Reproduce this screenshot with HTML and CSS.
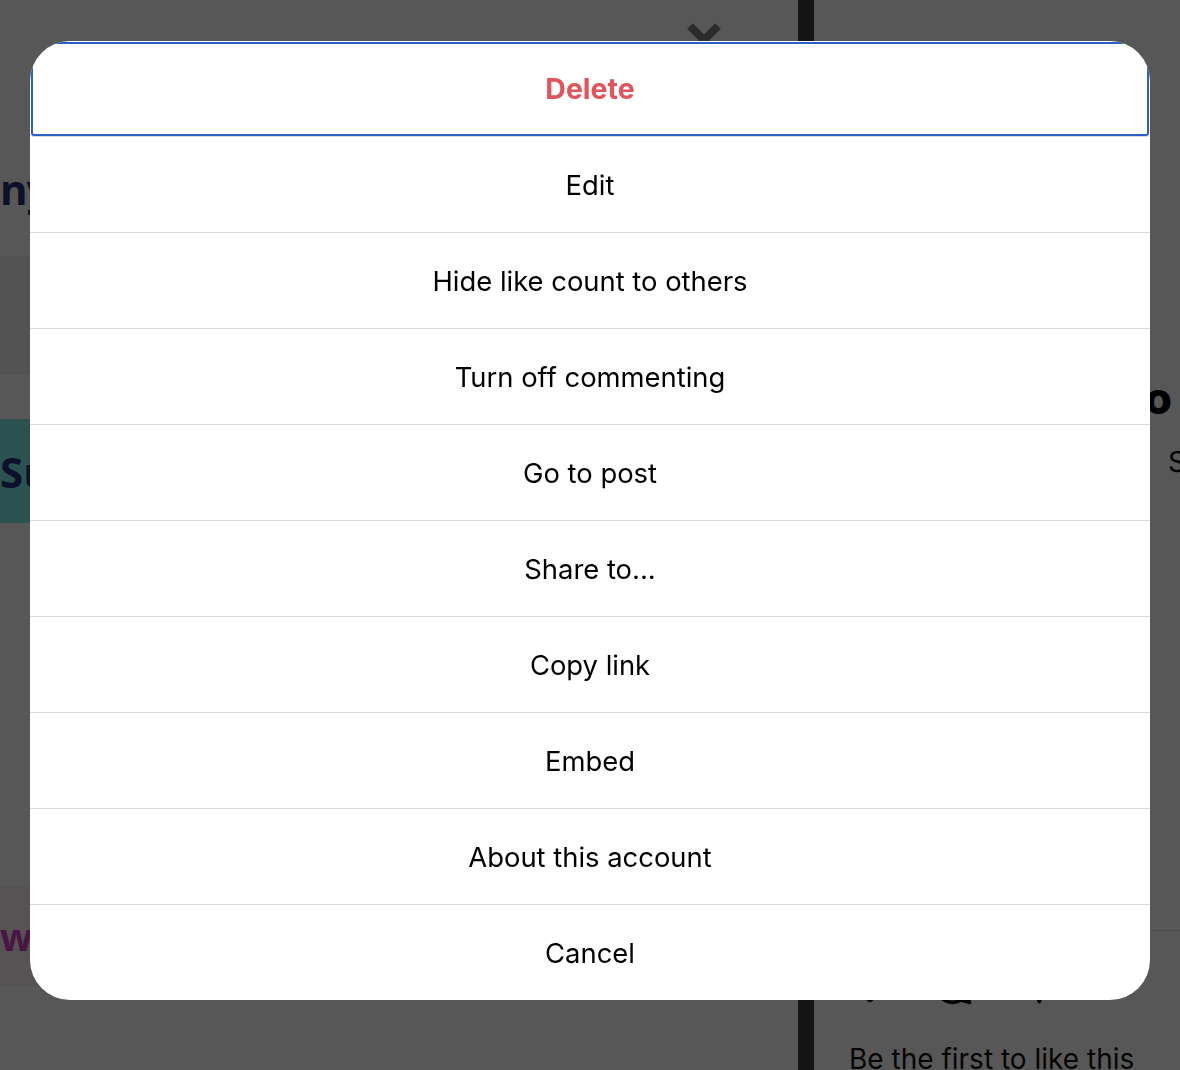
FILE: index.html
```html
<!DOCTYPE html>
<html lang="en">
  <head>
    <meta charset="utf8">
    <meta name="viewport" content="width=device-width, initial-scale=1">
    <title>Post options</title>
    <link rel="stylesheet" href="styles.css">
  </head>

  <body>
    <div class="page">
      <section class="post-side">
        <div class="post-head">
          <div class="close-row">
            <svg class="close-icon" viewBox="0 0 36 36" aria-hidden="true">
              <path d="M4 4 L32 32 M32 4 L4 32" />
            </svg>
          </div>
          <h2 class="brand">ny</h2>
        </div>
        <div class="post-band"></div>
        <div class="promo promo-teal"><span>Su</span></div>
        <div class="promo promo-pink"><span>w</span></div>
      </section>

      <div class="divider"></div>

      <section class="detail-side">
        <h3 class="detail-title">Photo</h3>
        <p class="detail-sub">Sponsored</p>
        <div class="detail-actions">
          <svg class="action-icon" viewBox="0 0 24 24" aria-hidden="true">
            <path d="M12 21 C6 16 2.5 12.5 2.5 8.5 A4.8 4.8 0 0 1 12 6.5 A4.8 4.8 0 0 1 21.5 8.5 C21.5 12.5 18 16 12 21 Z" />
          </svg>
          <svg class="action-icon" viewBox="0 0 24 24" aria-hidden="true">
            <path d="M20.6 17.1 A9.5 9.5 0 1 0 17.1 20.6 L22 22 Z" />
          </svg>
          <svg class="action-icon" viewBox="0 0 24 24" aria-hidden="true">
            <path d="M22 3 L9.2 10.1 M22 3 L15 21.5 L11 11 L2 6.5 Z" />
          </svg>
        </div>
        <p class="likes">Be the first to like this</p>
      </section>
    </div>

    <div class="overlay">
      <div class="sheet" role="dialog">
        <button class="sheet-item danger focused">Delete</button>
        <button class="sheet-item">Edit</button>
        <button class="sheet-item">Hide like count to others</button>
        <button class="sheet-item">Turn off commenting</button>
        <button class="sheet-item">Go to post</button>
        <button class="sheet-item">Share to...</button>
        <button class="sheet-item">Copy link</button>
        <button class="sheet-item">Embed</button>
        <button class="sheet-item">About this account</button>
        <button class="sheet-item">Cancel</button>
      </div>
    </div>
  </body>
</html>
```

FILE: styles.css
```css
:root {
  font-family: Inter, "Helvetica Neue", Arial, sans-serif;
  color: #000;
  background-color: #fff;
}

body {
  margin: 0;
  overflow: hidden;
}

.page {
  display: flex;
  height: 1070px;
  overflow: hidden;
}

/* left column, behind the dialog */

.post-side {
  width: 798px;
  flex: none;
  display: flex;
  flex-direction: column;
}

.post-head {
  height: 257px;
  border-bottom: 1px solid #ececec;
  display: flex;
  flex-direction: column;
}

.close-row {
  display: flex;
  justify-content: flex-end;
  padding: 22px 76px 0 0;
}

.close-icon {
  width: 36px;
  height: 36px;
  fill: none;
  stroke: #7e7e7e;
  stroke-width: 8;
}

.brand {
  margin: 108px 0 0;
  font-family: "Open Sans", sans-serif;
  font-size: 42px;
  font-weight: 700;
  line-height: 46px;
  letter-spacing: -1px;
  color: #232f78;
}

.post-band {
  height: 115px;
  background-color: #f4f4f4;
  border-bottom: 1px solid #ececec;
}

.promo {
  display: flex;
  align-items: center;
  font-family: "Open Sans", sans-serif;
  font-weight: 700;
}

.promo-teal {
  margin-top: 45px;
  height: 104px;
  background-color: #7ef0ee;
  color: #25307a;
  font-size: 42px;
}

.promo-pink {
  margin-top: 363px;
  height: 100px;
  background-color: #fff0f6;
  color: #d23ec8;
  font-size: 38px;
}

.divider {
  width: 16px;
  flex: none;
  background-color: #3c3c3c;
}

/* right column */

.detail-side {
  flex: 1;
  display: flex;
  flex-direction: column;
  padding-left: 35px;
  min-width: 0;
}

.detail-title {
  margin: 372px 8px 0 0;
  text-align: right;
  font-size: 44px;
  font-weight: 800;
  line-height: 52px;
}

.detail-sub {
  margin: 21px 0 0;
  padding-left: 319px;
  white-space: nowrap;
  font-size: 28px;
  line-height: 34px;
}

.detail-actions {
  margin-top: 451px;
  margin-left: -35px;
  padding: 33px 0 0 35px;
  border-top: 1px solid #dbdbdb;
  display: flex;
  gap: 40px;
}

.action-icon {
  width: 42px;
  height: 42px;
  fill: none;
  stroke: #000;
  stroke-width: 2;
  stroke-linejoin: round;
}

.likes {
  margin: 36px 0 0;
  font-size: 28px;
  line-height: 34px;
  color: #111;
}

/* dialog */

.overlay {
  position: fixed;
  top: 0;
  left: 0;
  right: 0;
  bottom: 0;
  background-color: rgba(0, 0, 0, 0.66);
  display: flex;
  justify-content: center;
  align-items: flex-start;
  padding-top: 41px;
}

.sheet {
  width: 1120px;
  background-color: #fff;
  border-radius: 40px;
  overflow: hidden;
  display: flex;
  flex-direction: column;
}

.sheet-item {
  height: 96px;
  border: 0;
  border-bottom: 1px solid #dbdbdb;
  background: none;
  padding: 1px 0 0;
  font-family: Inter, "Helvetica Neue", Arial, sans-serif;
  font-size: 27.4px;
  color: #000;
  cursor: pointer;
}

.sheet-item:last-child {
  height: 95px;
  border-bottom: 0;
}

.danger {
  padding: 0;
  color: #e0555d;
  font-size: 28.5px;
  font-weight: 700;
}

.focused {
  border-radius: 4px;
  outline: 2px solid #2c60c8;
  outline-offset: -3px;
}
```
